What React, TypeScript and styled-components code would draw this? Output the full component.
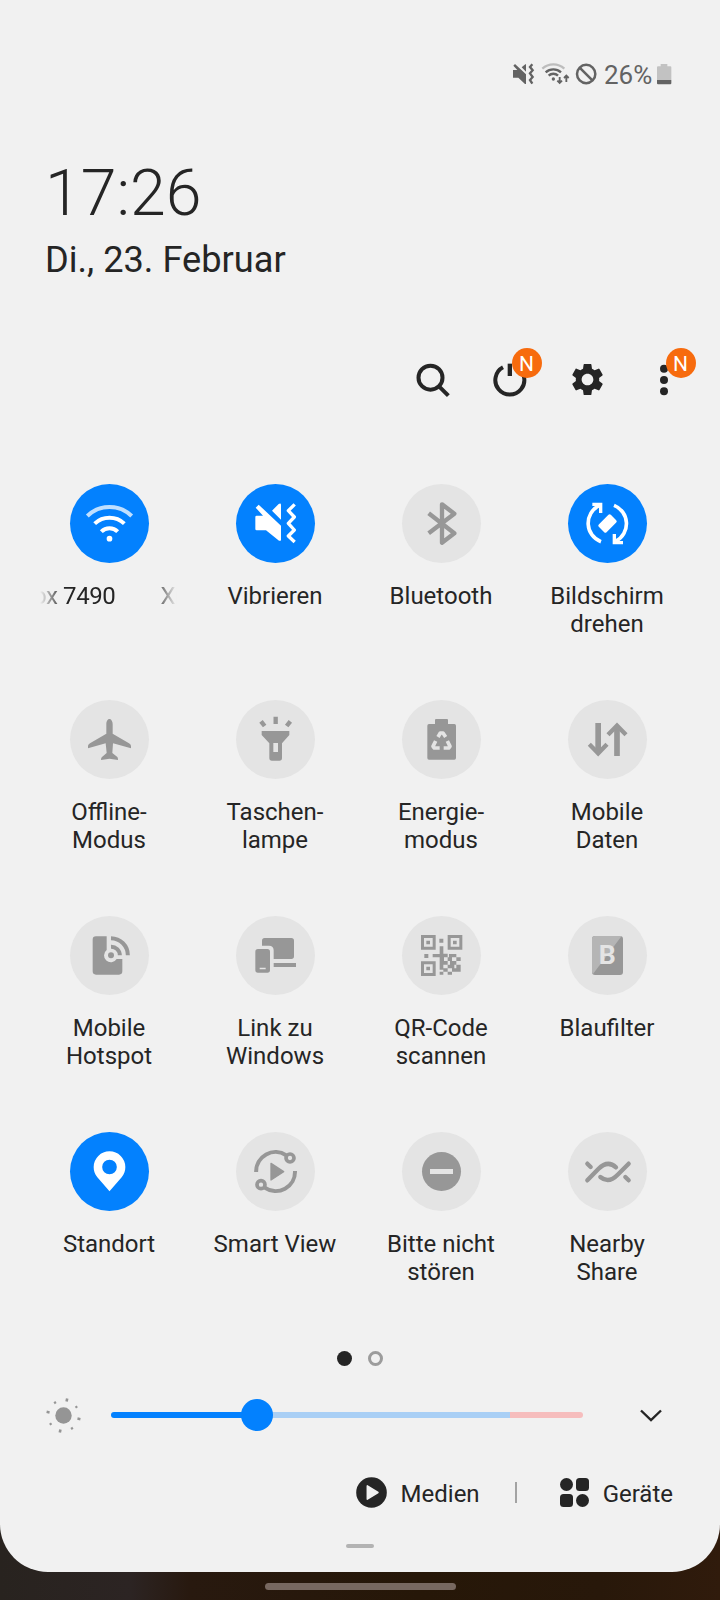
import React from 'react';
import styled, { createGlobalStyle } from 'styled-components';
import { MdSettings } from 'react-icons/md';

const INK = '#252525';
const BLUE = '#0381fe';
const OFF = '#e4e4e4';
const GREY = '#979797';

const GlobalStyle = createGlobalStyle`
  * { box-sizing: border-box; }
  body { margin: 0; background: #26190f; font-family: Roboto, "Liberation Sans", sans-serif; color: ${INK}; }
  svg { display: block; flex: none; }
`;

const Screen = styled.div`
  width: 720px;
  height: 1600px;
  overflow: hidden;
  background: linear-gradient(90deg, #28231f 0, #2c2423 130px, #28190f 190px, #261708 420px, #28180a 600px, #301b0c 720px);
`;

const Panel = styled.main`
  height: 1572px;
  background: #f1f1f1;
  border-radius: 0 0 48px 48px;
  display: flex;
  flex-direction: column;
`;

const StatusBar = styled.div`
  height: 108px;
  padding: 61px 48px 0 0;
  display: flex;
  justify-content: flex-end;
  align-items: flex-start;
`;

const BatteryText = styled.span`
  font-size: 26px;
  line-height: 29px;
  color: #636363;
  margin-left: -5px;
  width: 53px;
  white-space: nowrap;
`;

const Heading = styled.header`
  height: 217px;
  padding: 49px 45px 0;
`;

const Clock = styled.div`
  font-size: 64.4px;
  font-weight: 300;
  line-height: 72px;
`;

const DateLine = styled.div`
  font-size: 36.2px;
  line-height: 42px;
  margin-top: 10px;
`;

const Toolbar = styled.nav`
  height: 109px;
  padding-right: 17.500px;
  display: flex;
  justify-content: flex-end;
  align-items: center;
`;

const ToolButton = styled.div`
  position: relative;
  width: 77px;
  height: 60px;
  display: flex;
  align-items: center;
  justify-content: center;
`;

const NewBadge = styled.span`
  position: absolute;
  left: 40px;
  top: -2px;
  width: 30px;
  height: 30px;
  border-radius: 50%;
  background: #f76b0e;
  color: #fff;
  font-size: 21px;
  line-height: 32px;
  text-align: center;
`;

const Tiles = styled.section`
  height: 875px;
  padding: 50px 29px 0 26px;
  display: grid;
  grid-template-columns: repeat(4, 166px);
  grid-auto-rows: 216px;
`;

const Tile = styled.div`
  display: flex;
  flex-direction: column;
  align-items: center;
`;

const TileCircle = styled.div<{ $on?: boolean }>`
  width: 79px;
  height: 79px;
  border-radius: 50%;
  background: ${p => (p.$on ? BLUE : OFF)};
  color: ${p => (p.$on ? '#fff' : GREY)};
`;

const TileLabel = styled.div`
  margin-top: 19px;
  font-size: 24px;
  line-height: 28px;
  text-align: center;
  white-space: pre-line;
`;

const Marquee = styled.div`
  margin-top: 19px;
  width: 138px;
  overflow: hidden;
  font-size: 24px;
  letter-spacing: -0.4px;
  line-height: 28px;
  white-space: nowrap;
  display: flex;
  gap: 45px;
  mask-image: linear-gradient(90deg, transparent 0, #000 24px, #000 112px, transparent 137px);
`;

const MarqueeName = styled.span`
  margin-left: -7px;
`;

const Pager = styled.div`
  height: 18px;
  margin-top: 40px;
  display: flex;
  justify-content: center;
  align-items: center;
  gap: 16px;
`;

const PageDot = styled.span<{ $current?: boolean }>`
  width: 15px;
  height: 15px;
  border-radius: 50%;
  background: ${p => (p.$current ? INK : 'transparent')};
  border: ${p => (p.$current ? 'none' : '3px solid #9c9c9c')};
`;

const Brightness = styled.div`
  height: 60px;
  margin-top: 18px;
  padding: 0 58px 0 45px;
  display: flex;
  align-items: center;
`;

const Track = styled.div`
  position: relative;
  width: 472px;
  height: 6px;
  margin: 0 auto 0 29px;
  border-radius: 3px;
  background: linear-gradient(90deg, ${BLUE} 0 146px, #a9cff5 146px 399px, #f6bdbd 399px);
`;

const Thumb = styled.span`
  position: absolute;
  left: 130px;
  top: -13px;
  width: 32px;
  height: 32px;
  border-radius: 50%;
  background: ${BLUE};
`;

const Footer = styled.footer`
  height: 60px;
  margin-top: 17px;
  padding-right: 47px;
  display: flex;
  justify-content: flex-end;
  align-items: center;
  font-size: 24px;
  line-height: 28px;
`;

const FooterLabel = styled.span`
  margin-left: 14px;
  padding-top: 3px;
`;

const Divider = styled.span`
  width: 2px;
  height: 21px;
  margin: 0 43px 0 35px;
  background: #a3a3a3;
`;

const Handle = styled.div`
  width: 28px;
  height: 4px;
  margin: 22px auto 0;
  border-radius: 2px;
  background: #b3b3b3;
`;

const NavPill = styled.div`
  width: 191px;
  height: 7px;
  margin: 11px auto 0;
  border-radius: 4px;
  background: #776860;
`;

/* A tile drawing is made on a 237-unit grid; x and y shift its origin. */
const Glyph = ({ x, y, children }: { x: number; y: number; children: React.ReactNode }) => (
  <svg width="79" height="79" viewBox={`${x} ${y} 237 237`} fill="currentColor">{children}</svg>
);

const line = (width: number) => ({ fill: 'none', stroke: 'currentColor', strokeWidth: width });

const SPEAKER = 'M676 141Q676 137 680 137H699L677 113L686 104L753 167V209Q753 214 747 212L708 181H680Q676 181 676 177Z';
const SPEAKER_TIP = 'M726 122L746 102Q753 98 753 105V149Z';
const WAVES = 'M794 103L775 122L793 141L775 160L793 180L775 198L794 216';

const Wifi = () => (
  <Glyph x={120} y={42}>
    <circle cx="238.500" cy="206" r="8.500" />
    <path {...line(12)} d="M214 185A34 34 0 0 1 263 185" />
    <path {...line(12)} d="M194 161A65 65 0 0 1 283 161" />
    <path {...line(12)} opacity=".75" d="M172 138A95 95 0 0 1 305 138" />
  </Glyph>
);

const Vibrate = () => (
  <Glyph x={618} y={42}>
    <path d={SPEAKER} />
    <path d={SPEAKER_TIP} />
    <path {...line(10)} strokeLinejoin="round" d={WAVES} />
  </Glyph>
);

const Bluetooth = () => (
  <Glyph x={66} y={42}>
    <path {...line(13)} strokeLinejoin="round" d="M146 130L223 190L186 218V103L223 131L146 190" />
  </Glyph>
);

const Rotate = () => (
  <Glyph x={564} y={42}>
    <path {...line(11)} d="M663 215A59 59 0 0 1 657 107" />
    <path {...line(11)} d="M702 106A59 59 0 0 1 708 213" />
    <path {...line(10)} d="M637 103H662V129M729 218H703V192" />
    <rect x="657" y="144" width="51" height="33" rx="5" transform="rotate(-45 682.500 160.500)" />
  </Glyph>
);

const Plane = () => (
  <Glyph x={120} y={30}>
    <path d="M238.500 87C244 87 248 95 248 103V131L297 160Q303 163 303 168V175L249 160L247 189L262 201Q264 203 264 210L238.500 206L213 210Q213 203 216 201L230 189L227 160L174 175V168Q174 163 180 160L229 131V103C229 95 232 87 238.500 87Z" />
  </Glyph>
);

const Torch = () => (
  <Glyph x={618} y={30}>
    <path {...line(13)} d="M737 80V102M693 94L704 108M781 94L770 108" />
    <path fillRule="evenodd" d="M695 123H778V135L756 160V204Q756 212 748 212H726Q718 212 718 204V160L695 135ZM730 159V186H744V159Z" />
  </Glyph>
);

const Battery = () => (
  <Glyph x={66} y={30}>
    <path d="M165 102V90Q165 87 168 87H201Q204 87 204 90V102H223Q228 102 228 107V204Q228 209 223 209H147Q142 209 142 204V107Q142 102 147 102Z" />
    <path fill="none" stroke={OFF} strokeWidth="11" strokeLinejoin="round" d="M174 141L181 129H189L197 141M167 153L159 169L163 174H179M191 174H206L210 169L202 153" />
  </Glyph>
);

const MobileData = () => (
  <Glyph x={564} y={30}>
    <path {...line(17)} d="M654.500 99V189M711 198V109" />
    <path {...line(13)} d="M628 163L654.500 190L681 163M684 134L711 107L738 134" />
  </Glyph>
);

const Hotspot = () => (
  <Glyph x={120} y={33}>
    <path d="M198 94H230V135A20.500 20.500 0 1 0 260 162H277V199Q277 209 267 209H198Q188 209 188 199V104Q188 94 198 94Z" />
    <circle cx="243" cy="151" r="9" />
    <path {...line(12)} d="M243 125A26 26 0 0 1 269.500 151M243 99.500A51 51 0 0 1 293.500 151" />
  </Glyph>
);

const LinkWindows = () => (
  <Glyph x={618} y={33}>
    <path d="M696 122V107Q696 99 704 99H784Q792 99 792 107V154Q792 162 784 162H731V136Q731 122 717 122Z" />
    <path fillRule="evenodd" d="M684 132H712Q720 132 720 140V195Q720 203 712 203H684Q676 203 676 195V140Q676 132 684 132ZM689 188V193H707V188Z" />
    <path d="M731 174H798V186H731Z" />
  </Glyph>
);

const QrCode = () => (
  <Glyph x={66} y={33}>
    <path {...line(9)} d="M127.500 94.500H162.500V129.500H127.500ZM207.500 94.500H242.500V129.500H207.500ZM127.500 173.500H162.500V208.500H127.500Z" />
    <path d="M139 107H150V118H139ZM219 107H230V118H219ZM139 185H150V196H139ZM178 101H190V113H178ZM133 147H145V159H133Z" />
    <path d="M179 124H190V146H203V157H192V168H203V179H190V190H179V157H158V147H179ZM203 157H216V168H203ZM207 147H229V157H216V168H229V157H242V168H229V179H216V190H203V179H210V168H216V157H207ZM190 190H203V200H190ZM179 200H190V209H179ZM229 179H242V200H229ZM216 190H229V200H216ZM203 200H216V209H203ZM179 185H190V194H179ZM216 179H223V190H216Z" />
  </Glyph>
);

const BlueFilter = () => (
  <Glyph x={564} y={33}>
    <rect x="636" y="93" width="93" height="117" rx="9" />
    <path fill="#b5b5b5" d="M645 93H725L639 207Q636 205 636 201V102Q636 93 645 93Z" />
    <text x="656" y="178" fontSize="80" fontWeight="700" fill={OFF}>B</text>
  </Glyph>
);

const Location = () => (
  <Glyph x={120} y={36}>
    <path fillRule="evenodd" d="M238.500 214L202 172C194 162 191 152 191 141A47.500 47 0 0 1 286 141C286 152 283 162 275 172ZM238.500 119A22 22 0 1 0 238.500 163A22 22 0 1 0 238.500 119Z" />
  </Glyph>
);

const SmartView = () => (
  <Glyph x={618} y={36}>
    <path {...line(12)} d="M678.500 156A58 58 0 0 1 769 106M795 153A58 58 0 0 1 704 203" />
    <circle {...line(11)} cx="780" cy="114" r="12" />
    <circle {...line(11)} cx="693" cy="194" r="12" />
    <path stroke="currentColor" strokeWidth="4" strokeLinejoin="round" d="M723 130L761 155L723 180Z" />
  </Glyph>
);

const DoNotDisturb = () => (
  <Glyph x={66} y={36}>
    <circle cx="184.500" cy="154.500" r="58.500" />
    <path fill={OFF} d="M150 147H219V162H150Z" />
  </Glyph>
);

const NearbyShare = () => (
  <Glyph x={564} y={36}>
    <path {...line(13)} strokeLinecap="round" d="M622 181L655 147Q683 119 708 142M746 131L713 164Q686 192 661 171M622 131L632 141M736 171L746 181" />
  </Glyph>
);

type TileInfo = { label: string; icon: React.ReactNode; on?: boolean };

const TILES: TileInfo[] = [
  { label: 'Vibrieren', icon: <Vibrate />, on: true },
  { label: 'Bluetooth', icon: <Bluetooth /> },
  { label: 'Bildschirm\ndrehen', icon: <Rotate />, on: true },
  { label: 'Offline-\nModus', icon: <Plane /> },
  { label: 'Taschen-\nlampe', icon: <Torch /> },
  { label: 'Energie-\nmodus', icon: <Battery /> },
  { label: 'Mobile\nDaten', icon: <MobileData /> },
  { label: 'Mobile\nHotspot', icon: <Hotspot /> },
  { label: 'Link zu\nWindows', icon: <LinkWindows /> },
  { label: 'QR-Code\nscannen', icon: <QrCode /> },
  { label: 'Blaufilter', icon: <BlueFilter /> },
  { label: 'Standort', icon: <Location />, on: true },
  { label: 'Smart View', icon: <SmartView /> },
  { label: 'Bitte nicht\nstören', icon: <DoNotDisturb /> },
  { label: 'Nearby\nShare', icon: <NearbyShare /> },
];

const StatusIcons = () => (
  <svg width="98" height="28" viewBox="33 33 294 84" fill="#636363" stroke="none">
    <path d="M39 60H52L40 47L45 42L78 73V102H75L55 83H39ZM65 52L76 43H78V65Z" />
    <path fill="none" stroke="#636363" strokeWidth="7" d="M97 43L90 51L98 61L90 70L98 81L90 90L97 101" />
    <circle cx="160" cy="87" r="5" />
    <path fill="none" stroke="#bdbdbd" strokeWidth="7" d="M127 56A49 49 0 0 1 193 56" />
    <path fill="none" stroke="#636363" strokeWidth="7" d="M137 67A34 34 0 0 1 183 67M146 77A20 20 0 0 1 174 77" />
    <path fill="none" stroke="#636363" strokeWidth="5.500" d="M179 81V99M172 92L179 99L186 92M199 96V78M192 84L199 77L206 84" />
    <circle fill="none" stroke="#636363" strokeWidth="7.500" cx="258.500" cy="72" r="27.500" />
    <path stroke="#636363" strokeWidth="7.500" d="M239 53L278 92" />
  </svg>
);

const StatusBattery = () => (
  <svg width="15" height="28" viewBox="471 33 45 84">
    <path fill="#c2c2c2" d="M482 42H502V49H511Q514 49 514 52V90H471V52Q471 49 474 49H482Z" />
    <path fill="#636363" d="M471 90H514V100Q514 103 511 103H474Q471 103 471 100Z" />
  </svg>
);

const SearchIcon = () => (
  <svg width="36" height="36" viewBox="46 79 108 108" color={INK}>
    <circle {...line(12)} cx="92.500" cy="126" r="36" />
    <path {...line(12)} d="M118 152L146 180" />
  </svg>
);

const PowerIcon = () => (
  <svg width="36" height="36" viewBox="278 79 108 108" color={INK}>
    <path {...line(12)} d="M311 95A43.500 43.500 0 1 0 352 95" />
    <path {...line(13)} d="M331.500 84V121" />
  </svg>
);

const MoreIcon = () => (
  <svg width="12" height="36" viewBox="775 79 36 108" fill={INK} overflow="visible">
    <circle cx="793" cy="99" r="12" />
    <circle cx="793" cy="133" r="12" />
    <circle cx="793" cy="167" r="12" />
  </svg>
);

const SunIcon = () => (
  <svg width="37" height="37" viewBox="-18.500 -18.500 37 37" fill="#959595">
    <circle r="8.200" />
    {[0, 1, 2, 3, 4, 5, 6, 7].map(i => (
      <rect key={i} x="-1.200" y={i % 2 ? -16.500 : -17.300} width={i % 2 ? 2.200 : 2.600} height={i % 2 ? 2.200 : 3} transform={`rotate(${12 + i * 45})`} />
    ))}
  </svg>
);

const ChevronIcon = () => (
  <svg width="22" height="13" viewBox="0 0 22 13" color={INK}>
    <path {...line(2.4)} d="M1 1.500L11 11L21 1.500" />
  </svg>
);

const MediaIcon = () => (
  <svg width="31" height="31" viewBox="0 0 31 31">
    <circle cx="15.500" cy="15.500" r="15.300" fill={INK} />
    <path fill="#f1f1f1" stroke="#f1f1f1" strokeWidth="1.500" strokeLinejoin="round" d="M11.300 8.800V22.200L22 15.500Z" />
  </svg>
);

const DevicesIcon = () => (
  <svg width="29" height="29" viewBox="0 0 29 29" fill={INK}>
    <circle cx="6.500" cy="6.500" r="6.500" />
    <rect x="16" width="13" height="13" rx="3.500" />
    <rect y="16" width="13" height="13" rx="3.500" />
    <circle cx="22.500" cy="22.500" r="6.500" />
  </svg>
);

export default function App() {
  return (
    <Screen>
      <GlobalStyle />
      <Panel>
        <StatusBar>
          <StatusIcons />
          <BatteryText>26%</BatteryText>
          <StatusBattery />
        </StatusBar>
        <Heading>
          <Clock>17:26</Clock>
          <DateLine>Di., 23. Februar</DateLine>
        </Heading>
        <Toolbar>
          <ToolButton><SearchIcon /></ToolButton>
          <ToolButton><PowerIcon /><NewBadge>N</NewBadge></ToolButton>
          <ToolButton><MdSettings size={39} color={INK} /></ToolButton>
          <ToolButton><MoreIcon /><NewBadge>N</NewBadge></ToolButton>
        </Toolbar>
        <Tiles>
          <Tile>
            <TileCircle $on><Wifi /></TileCircle>
            <Marquee><MarqueeName>ox 7490</MarqueeName><span>Xi</span></Marquee>
          </Tile>
          {TILES.map(t => (
            <Tile key={t.label}>
              <TileCircle $on={t.on}>{t.icon}</TileCircle>
              <TileLabel>{t.label}</TileLabel>
            </Tile>
          ))}
        </Tiles>
        <Pager>
          <PageDot $current />
          <PageDot />
        </Pager>
        <Brightness>
          <SunIcon />
          <Track><Thumb /></Track>
          <ChevronIcon />
        </Brightness>
        <Footer>
          <MediaIcon />
          <FooterLabel>Medien</FooterLabel>
          <Divider />
          <DevicesIcon />
          <FooterLabel>Geräte</FooterLabel>
        </Footer>
        <Handle />
      </Panel>
      <NavPill />
    </Screen>
  );
}
